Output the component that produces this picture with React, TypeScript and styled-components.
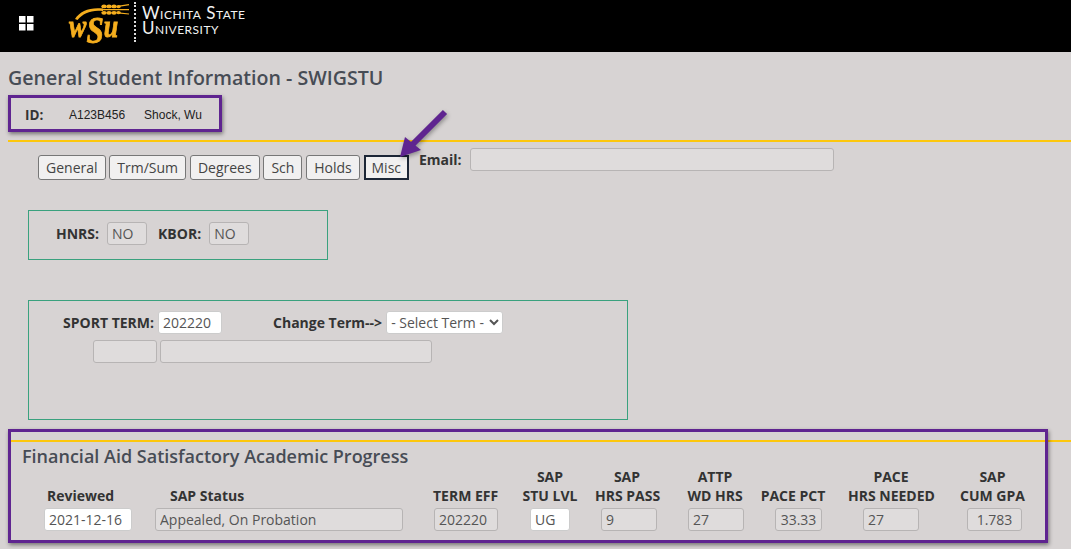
import React from 'react';
import styled, { createGlobalStyle } from 'styled-components';

const sapColumns = [
  { lines: ['Reviewed'], value: '2021-12-16', step: 111, labelWidth: 88, labelPad: 3, labelAlign: 'left', inset: 0, inputWidth: 88, editable: true },
  { lines: ['SAP Status'], value: 'Appealed, On Probation', step: 278, labelWidth: 248, labelPad: 15, labelAlign: 'left', inset: 0, inputWidth: 248 },
  { lines: ['TERM EFF'], value: '202220', step: 87, labelWidth: 65, inset: 1, inputWidth: 64 },
  { lines: ['SAP', 'STU LVL'], value: 'UG', step: 75, labelWidth: 60, inset: 10, inputWidth: 40, editable: true },
  { lines: ['SAP', 'HRS PASS'], value: '9', step: 88, labelWidth: 64, inset: 6, inputWidth: 56 },
  { lines: ['ATTP', 'WD HRS'], value: '27', step: 77, labelWidth: 64, inset: 5, inputWidth: 56 },
  { lines: ['PACE PCT'], value: '33.33', step: 88, labelWidth: 66, inset: 15, inputWidth: 47, centered: true },
  { lines: ['PACE', 'HRS NEEDED'], value: '27', step: 112, labelWidth: 86, inset: 15, inputWidth: 56 },
  { lines: ['SAP', 'CUM GPA'], value: '1.783', step: 70, labelWidth: 65, inset: 7, inputWidth: 55, centered: true },
];

const tabs = ['General', 'Trm/Sum', 'Degrees', 'Sch', 'Holds', 'Misc'];

const App: React.FC = () => (
  <Page>
    <GlobalStyle />
    <Header>
      <AppsIcon width="15" height="15" viewBox="0 0 15 15">
        <rect x="0" y="0" width="6.5" height="6.5" />
        <rect x="8" y="0" width="6.5" height="6.5" />
        <rect x="0" y="8" width="6.5" height="6.5" />
        <rect x="8" y="8" width="6.5" height="6.5" />
      </AppsIcon>
      <LogoMark>
        <Wheat width="62" height="24" viewBox="0 0 62 24">
          <path d="M7 16C12 8 22 4 35 5.5L35 8C24 6.5 15 10 9.5 17z" fill="#f5ae1e" />
          <g fill="#f5ae1e">
            <ellipse cx="36" cy="3.4" rx="2.7" ry="1.9" />
            <ellipse cx="41" cy="3.4" rx="2.7" ry="1.9" />
            <ellipse cx="46" cy="3.4" rx="2.7" ry="1.9" />
            <ellipse cx="50.5" cy="3.6" rx="2.3" ry="1.6" />
            <ellipse cx="36" cy="9.8" rx="2.7" ry="1.9" />
            <ellipse cx="41" cy="9.8" rx="2.7" ry="1.9" />
            <ellipse cx="46" cy="9.8" rx="2.7" ry="1.9" />
            <ellipse cx="50.5" cy="9.6" rx="2.3" ry="1.6" />
          </g>
          <path d="M34 6.6H53M50 3.4L61 1.6M50 6.6H61M50 9.8L61 11" fill="none" stroke="#f5ae1e" strokeWidth="1.2" />
        </Wheat>
        <LogoLetters>
          w<LogoBig>S</LogoBig>u
        </LogoLetters>
      </LogoMark>
      <LogoDivider />
      <SchoolName>
        Wichita State
        <br />
        University
      </SchoolName>
    </Header>

    <Main>
      <Title>General Student Information - SWIGSTU</Title>
      <IdRow>
        <IdLabel>ID:</IdLabel>
        <IdValue>A123B456</IdValue>
        <IdValue>Shock, Wu</IdValue>
      </IdRow>
      <GoldRule />

      <TabRow>
        <Tabs>
          {tabs.map((t) => (
            <Tab key={t} $active={t === 'Misc'}>
              {t}
            </Tab>
          ))}
        </Tabs>
        <EmailLabel>Email:</EmailLabel>
        <Field $width={364} readOnly value="" />
      </TabRow>

      <FlagsBox>
        <FieldLabel $after={8}>HNRS:</FieldLabel>
        <Field $width={40} readOnly value="NO" />
        <FieldLabel $gap={11} $after={8}>KBOR:</FieldLabel>
        <Field $width={40} readOnly value="NO" />
      </FlagsBox>

      <SportBox>
        <SportRow>
          <FieldLabel $after={4}>SPORT TERM:</FieldLabel>
          <Field $width={64} $editable value="202220" readOnly />
          <FieldLabel $gap={51} $after={4}>Change Term--&gt;</FieldLabel>
          <TermSelect defaultValue="">
            <option value="">- Select Term -</option>
          </TermSelect>
        </SportRow>
        <SportDetailRow>
          <Field $width={64} readOnly value="" />
          <Field $width={272} readOnly value="" />
        </SportDetailRow>
      </SportBox>

      <GoldRule $top={20} />
      <SectionTitle>Financial Aid Satisfactory Academic Progress</SectionTitle>
      <SapRow>
        {sapColumns.map((c) => (
          <SapCell key={c.lines.join()} $step={c.step}>
            <SapLabel $width={c.labelWidth} $pad={c.labelPad ?? 0} $align={c.labelAlign ?? 'center'}>
              {c.lines.map((l) => (
                <div key={l}>{l}</div>
              ))}
            </SapLabel>
            <SapField
              $width={c.inputWidth}
              $inset={c.inset}
              $editable={c.editable}
              $centered={c.centered}
              readOnly
              value={c.value}
            />
          </SapCell>
        ))}
      </SapRow>
    </Main>

    <CalloutBox $left={8} $top={95} $width={214} $height={37} />
    <CalloutBox $left={8} $top={429} $width={1040} $height={114} />
    <CalloutArrow width="60" height="60" viewBox="0 0 60 60">
      <path d="M46 5L13 38" stroke="#5f2490" strokeWidth="6" fill="none" />
      <path d="M1 50L6 30L22 43z" fill="#5f2490" />
    </CalloutArrow>
  </Page>
);

export default App;

const GlobalStyle = createGlobalStyle`
  html, body {
    margin: 0;
    padding: 0;
    background: #d7d3d3;
  }
  body {
    font-family: "Open Sans", "Liberation Sans", sans-serif;
    overflow: hidden;
  }
`;

const Page = styled.div`
  position: relative;
  width: 1071px;
  height: 549px;
  overflow: hidden;
  background: #d7d3d3;
  color: #333;
`;
const Header = styled.header`
  display: flex;
  align-items: flex-start;
  height: 52px;
  background: #000;
`;
const AppsIcon = styled.svg`
  margin: 16px 34px 0 19px;
  fill: #fff;
  flex: none;
`;
const LogoMark = styled.div`
  position: relative;
  width: 62px;
  height: 44px;
  flex: none;
`;
const Wheat = styled.svg`
  position: absolute;
  top: 3px;
  left: 0;
`;
const LogoLetters = styled.div`
  position: absolute;
  top: 9px;
  left: 1px;
  font-family: "Liberation Serif", serif;
  font-style: italic;
  font-weight: 700;
  font-size: 31px;
  line-height: 36px;
  color: #f5ae1e;
  -webkit-text-stroke: 0.8px #f5ae1e;
  white-space: nowrap;
  transform: scaleX(0.84);
  transform-origin: left center;
`;
const LogoBig = styled.span`
  font-size: 37px;
  line-height: 0;
  vertical-align: -6px;
`;
const LogoDivider = styled.div`
  width: 0;
  height: 40px;
  margin: 2px 6px 0 4px;
  border-left: 2px dotted #ddd;
  flex: none;
`;
const SchoolName = styled.div`
  margin: 5px 0 0 0;
  font-family: "Lato", "Open Sans", sans-serif;
  font-variant: small-caps;
  font-size: 17px;
  line-height: 15px;
  letter-spacing: 0.5px;
  color: #f2f2f2;
`;
const Main = styled.main`
  display: flex;
  flex-direction: column;
  padding-left: 8px;
`;
const Title = styled.h1`
  margin: 12px 0 0;
  font-size: 19.6px;
  line-height: 27px;
  font-weight: 600;
  color: #474c55;
`;
const IdRow = styled.div`
  display: flex;
  align-items: center;
  height: 20px;
  margin-top: 14px;
  padding-left: 17px;
`;
const IdLabel = styled.span`
  width: 44px;
  font-size: 13.5px;
  font-weight: 700;
`;
const IdValue = styled.span`
  margin-right: 19px;
  font-family: "Liberation Sans", sans-serif;
  font-size: 12px;
  color: #222;
`;
const GoldRule = styled.div<{ $top?: number }>`
  height: 2px;
  margin-top: ${(p) => p.$top ?? 15}px;
  background: #fdc70c;
  flex: none;
`;
const TabRow = styled.div`
  display: flex;
  align-items: flex-start;
  margin-top: 6px;
  padding-left: 30px;
`;
const Tabs = styled.div`
  display: flex;
  gap: 3.8px;
  margin-top: 7px;
  margin-right: 10px;
`;
const Tab = styled.button<{ $active?: boolean }>`
  box-sizing: border-box;
  height: 25px;
  padding: 0 ${(p) => (p.$active ? '6px' : '7px')};
  font-family: inherit;
  font-size: 14px;
  color: #444;
  background: #f1f0f0;
  border: ${(p) => (p.$active ? '2px solid #1c2636' : '1px solid #777')};
  border-radius: ${(p) => (p.$active ? '0' : '3px')};
`;
const EmailLabel = styled.span`
  margin: 3px 8px 0 0;
  font-size: 14px;
  line-height: 18px;
  font-weight: 700;
`;
const Field = styled.input<{ $width: number; $editable?: boolean }>`
  box-sizing: border-box;
  width: ${(p) => p.$width}px;
  height: 23px;
  padding: 0 4px;
  font-family: inherit;
  font-size: 14px;
  color: #555;
  background: ${(p) => (p.$editable ? '#fff' : '#dfdcdc')};
  border: 1px solid ${(p) => (p.$editable ? '#ccc' : '#b7b4b4')};
  border-radius: 3px;
  outline: none;
  flex: none;
`;
const FieldLabel = styled.span<{ $gap?: number; $after?: number }>`
  margin-left: ${(p) => p.$gap ?? 0}px;
  margin-right: ${(p) => p.$after ?? 3}px;
  font-size: 14px;
  font-weight: 700;
  white-space: nowrap;
`;
const FlagsBox = styled.div`
  box-sizing: border-box;
  display: flex;
  align-items: center;
  width: 300px;
  height: 50px;
  margin: 30px 0 0 20px;
  padding: 0 0 3px 27px;
  border: 1px solid #3aa17e;
`;
const SportBox = styled.div`
  box-sizing: border-box;
  width: 600px;
  height: 120px;
  margin: 40px 0 0 20px;
  padding: 10px 0 0 34px;
  border: 1px solid #3aa17e;
`;
const SportRow = styled.div`
  display: flex;
  align-items: center;
`;
const TermSelect = styled.select`
  box-sizing: border-box;
  width: 117px;
  height: 23px;
  padding: 0;
  font-family: inherit;
  font-size: 14px;
  color: #555;
  background: #fff;
  border: 1px solid #ccc;
  border-radius: 3px;
`;
const SportDetailRow = styled.div`
  display: flex;
  gap: 3px;
  margin: 6px 0 0 30px;
`;
const SectionTitle = styled.h2`
  margin: 3px 0 0 14px;
  font-size: 18px;
  line-height: 23px;
  font-weight: 600;
  color: #474c55;
`;
const SapRow = styled.div`
  display: flex;
  align-items: flex-end;
  padding-left: 36px;
  margin-top: -1px;
`;
const SapCell = styled.div<{ $step: number }>`
  display: flex;
  flex-direction: column;
  width: ${(p) => p.$step}px;
  flex: none;
`;
const SapLabel = styled.div<{ $width: number; $pad: number; $align: string }>`
  box-sizing: border-box;
  width: ${(p) => p.$width}px;
  padding-left: ${(p) => p.$pad}px;
  margin-bottom: 3px;
  font-size: 14px;
  line-height: 19px;
  font-weight: 700;
  text-align: ${(p) => p.$align};
  white-space: nowrap;
`;
const SapField = styled.input<{ $width: number; $inset: number; $editable?: boolean; $centered?: boolean }>`
  box-sizing: border-box;
  width: ${(p) => p.$width}px;
  height: 23px;
  margin-left: ${(p) => p.$inset}px;
  padding: 0 4px;
  font-family: inherit;
  font-size: 14px;
  color: #555;
  text-align: ${(p) => (p.$centered ? 'center' : 'left')};
  background: ${(p) => (p.$editable ? '#fff' : '#dfdcdc')};
  border: 1px solid ${(p) => (p.$editable ? '#ccc' : '#b7b4b4')};
  border-radius: 3px;
  outline: none;
`;
const CalloutBox = styled.div<{ $left: number; $top: number; $width: number; $height: number }>`
  position: absolute;
  left: ${(p) => p.$left}px;
  top: ${(p) => p.$top}px;
  box-sizing: border-box;
  width: ${(p) => p.$width}px;
  height: ${(p) => p.$height}px;
  border: 3px solid #5f2490;
  box-shadow: 1px 2px 4px rgba(0, 0, 0, 0.45);
  pointer-events: none;
`;
const CalloutArrow = styled.svg`
  position: absolute;
  left: 399px;
  top: 107px;
  filter: drop-shadow(1px 2px 2px rgba(0, 0, 0, 0.35));
`;
